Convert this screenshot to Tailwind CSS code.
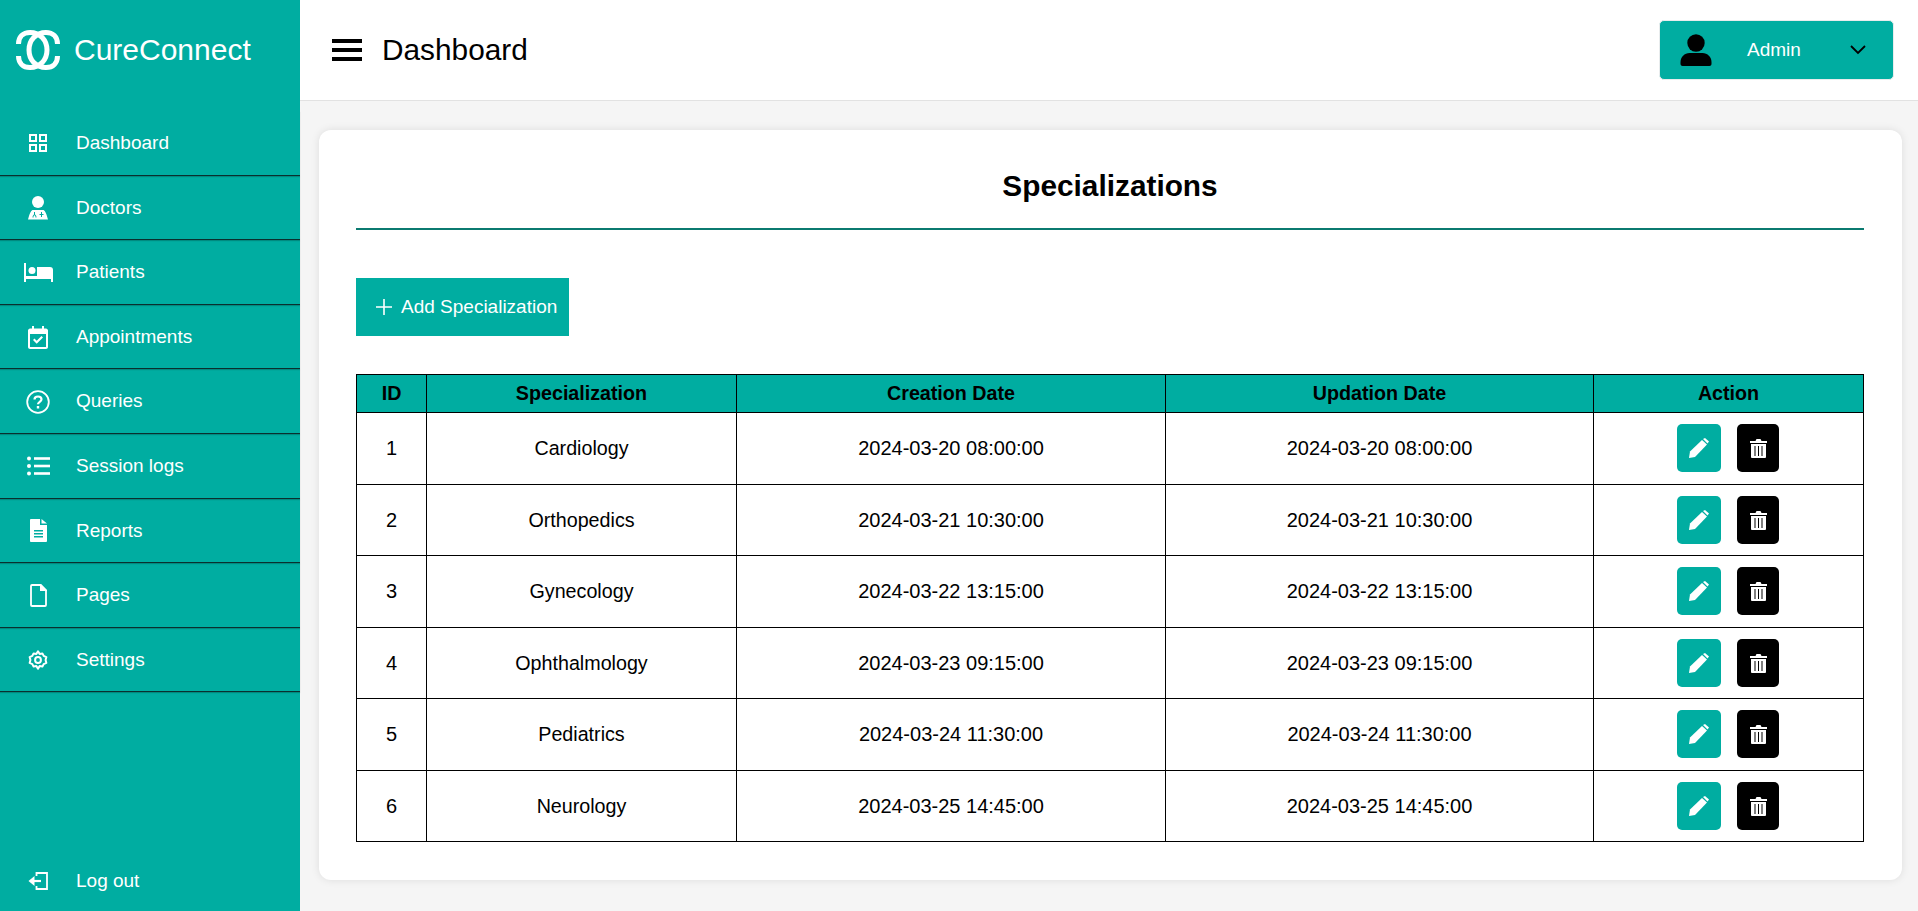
<!DOCTYPE html>
<html lang="en">
  <head>
    <meta charset="UTF-8" />
    <title>CureConnect - Specializations</title>
    <script src="https://cdn.jsdelivr.net/npm/@tailwindcss/browser@4"></script>
  </head>
  <body class="h-[911px] overflow-hidden bg-[#f5f5f5] font-['Liberation_Sans',Arial,sans-serif] text-black">
    <div class="flex h-full">
      <!-- Sidebar -->
      <aside class="flex h-full w-[300px] shrink-0 flex-col bg-[#00ada1] text-white">
        <div class="flex h-[100px] items-center pl-[16px]">
          <svg class="h-[40px] w-[44px]" viewBox="0 0 44 40" fill="none" stroke="#fff" stroke-width="5">
            <path d="M2.500 14C2.500 7 7 2.500 14 2.500 24 2.500 31 10 31 20 31 30 24 37.500 14 37.500 7 37.500 2.500 33 2.500 26" />
            <path d="M41.500 14C41.500 7 37 2.500 30 2.500 20 2.500 13 10 13 20 13 30 20 37.500 30 37.500 37 37.500 41.500 33 41.500 26" />
          </svg>
          <span class="ml-[14px] text-[30px] leading-none">CureConnect</span>
        </div>
        <nav class="mt-[11px] flex flex-col text-[19px]">
          <a class="flex h-[64.600px] items-center border-b border-[#0a2f2e] pt-[1px] shadow-[0_1px_1px_rgba(0,0,0,0.2)]">
            <span class="flex w-[76px] justify-center">
              <svg class="h-[18px] w-[18px]" viewBox="0 0 18 18" fill="none" stroke="#fff" stroke-width="2"><rect x="1" y="1" width="6" height="6" /><rect x="11" y="1" width="6" height="6" /><rect x="1" y="11" width="6" height="6" /><rect x="11" y="11" width="6" height="6" /></svg>
            </span>
            Dashboard
          </a>
          <a class="flex h-[64.600px] items-center border-b border-[#0a2f2e] pt-[1px] shadow-[0_1px_1px_rgba(0,0,0,0.2)]">
            <span class="flex w-[76px] justify-center">
              <svg class="h-[24px] w-[20px]" viewBox="0 0 20 24" fill="#fff"><circle cx="10" cy="6" r="6" /><path fill-rule="evenodd" d="M5 14h10c1.500 0 3 2 5 9.500H0C2 16 3.500 14 5 14zM6 16v2.500c-1 .5-1.500 1.500-1.500 3h1c0-1.500.5-2.200 1-2.200s1 .7 1 2.200h1c0-1.500-.5-2.500-1.500-3V16zM13 16v2h-1.500v1H13v2h1v-2h1.500v-1H14v-2z" /></svg>
            </span>
            Doctors
          </a>
          <a class="flex h-[64.600px] items-center border-b border-[#0a2f2e] pt-[1px] shadow-[0_1px_1px_rgba(0,0,0,0.2)]">
            <span class="flex w-[76px] justify-center">
              <svg class="h-[19px] w-[29px]" viewBox="0 0 29 19" fill="#fff"><rect width="2" height="19" /><rect y="13" width="29" height="3" /><rect x="27" y="13" width="2" height="6" /><path d="M13 4h13c2 0 3 1 3 3v7H13z" /><circle cx="8" cy="7.500" r="3.500" /></svg>
            </span>
            Patients
          </a>
          <a class="flex h-[64.600px] items-center border-b border-[#0a2f2e] pt-[1px] shadow-[0_1px_1px_rgba(0,0,0,0.2)]">
            <span class="flex w-[76px] justify-center">
              <svg class="h-[23px] w-[20px]" viewBox="0 0 20 23" fill="#fff"><path fill-rule="evenodd" d="M4 0h2v2.500h8V0h2v2.500h2c1 0 2 1 2 2V21c0 1-1 2-2 2H2c-1 0-2-1-2-2V4.500c0-1 1-2 2-2h2zM2 8v13h16V8z" /><path d="M5 14l1.500-1.500 2.200 2.200 4.800-4.700L15 11.500l-6.300 6.300z" /></svg>
            </span>
            Appointments
          </a>
          <a class="flex h-[64.600px] items-center border-b border-[#0a2f2e] pt-[1px] shadow-[0_1px_1px_rgba(0,0,0,0.2)]">
            <span class="flex w-[76px] justify-center">
              <svg class="h-[24px] w-[24px]" viewBox="0 0 24 24" fill="none" stroke="#fff" stroke-width="1.800"><circle cx="12" cy="12" r="10.800" /><path stroke-width="2.200" d="M8.500 9.500C8.500 7.500 10 6.500 12 6.500s3.500 1 3.500 2.800c0 2.500-3.500 2.500-3.500 5" /><path stroke-width="2.400" d="M12 16v2.500" /></svg>
            </span>
            Queries
          </a>
          <a class="flex h-[64.600px] items-center border-b border-[#0a2f2e] pt-[1px] shadow-[0_1px_1px_rgba(0,0,0,0.2)]">
            <span class="flex w-[76px] justify-center">
              <svg class="h-[20px] w-[23px]" viewBox="0 0 23 20" fill="#fff"><circle cx="2" cy="2.500" r="2" /><circle cx="2" cy="10" r="2" /><circle cx="2" cy="17.500" r="2" /><rect x="7" y="1.200" width="16" height="2.600" /><rect x="7" y="8.700" width="16" height="2.600" /><rect x="7" y="16.200" width="16" height="2.600" /></svg>
            </span>
            Session logs
          </a>
          <a class="flex h-[64.600px] items-center border-b border-[#0a2f2e] pt-[1px] shadow-[0_1px_1px_rgba(0,0,0,0.2)]">
            <span class="flex w-[76px] justify-center">
              <svg class="h-[23px] w-[17px]" viewBox="0 0 17 23" fill="#fff"><path fill-rule="evenodd" d="M1 0h9v6h7v16c0 .5-.5 1-1 1H1c-.5 0-1-.5-1-1V1c0-.5.5-1 1-1zM4 11v1.500h9V11zM4 14v1.500h9V14zM4 17v1.500h9V17z" /><path d="M11.500 0L17 4.500h-5.500z" /></svg>
            </span>
            Reports
          </a>
          <a class="flex h-[64.600px] items-center border-b border-[#0a2f2e] pt-[1px] shadow-[0_1px_1px_rgba(0,0,0,0.2)]">
            <span class="flex w-[76px] justify-center">
              <svg class="h-[23px] w-[17px]" viewBox="0 0 17 23" fill="none" stroke="#fff" stroke-width="1.800"><path d="M10.500 1H2c-.6 0-1 .4-1 1v19c0 .6.4 1 1 1h13c.6 0 1-.4 1-1V6.500z" /><path fill="#fff" stroke="none" d="M10 0h1l6 6v1h-7z" /></svg>
            </span>
            Pages
          </a>
          <a class="flex h-[64.600px] items-center border-b border-[#0a2f2e] pt-[1px] shadow-[0_1px_1px_rgba(0,0,0,0.2)]">
            <span class="flex w-[76px] justify-center">
              <svg class="h-[20px] w-[20px]" viewBox="0 0 24 24" fill="none" stroke="#fff" stroke-width="2.400" stroke-linejoin="round"><circle cx="12" cy="12" r="3.500" /><path d="M12 1.500l2 3.300 3.300-.7 1.500 3 3.200 1.400-.9 3.500.9 3.500-3.200 1.400-1.500 3-3.300-.7-2 3.300-2-3.300-3.300.7-1.500-3L2 15.500l.9-3.500L2 8.500l3.200-1.400 1.500-3 3.300.7z" /></svg>
            </span>
            Settings
          </a>
        </nav>
        <a class="mt-auto mb-[10px] flex h-[40px] items-center text-[19px]">
          <span class="flex w-[76px] justify-center">
            <svg class="h-[18px] w-[20px]" viewBox="0 0 20 18" fill="none" stroke="#fff" stroke-width="1.800"><path d="M8.500 4V1H19v16H8.500v-3" /><path d="M6 9h7" stroke-width="2.200" /><path fill="#fff" stroke="none" d="M0.500 9L6.500 4v10z" /></svg>
          </span>
          Log out
        </a>
      </aside>

      <div class="flex min-w-0 flex-1 flex-col">
        <!-- Top bar -->
        <header class="flex h-[101px] shrink-0 items-center justify-between border-b border-[#e2e2e2] bg-white pr-[24px] pl-[32px]">
          <div class="flex items-center">
            <svg class="h-[22px] w-[30px]" viewBox="0 0 30 22" fill="#000"><rect width="30" height="4" /><rect y="9" width="30" height="4" /><rect y="18" width="30" height="4" /></svg>
            <h1 class="ml-[20px] text-[29.800px] leading-none">Dashboard</h1>
          </div>
          <button class="flex h-[60px] w-[235px] items-center rounded-[5px] border border-[#e8eced] bg-[#00ada1] text-[19px] text-white">
            <svg class="ml-[20px] h-[32px] w-[32px]" viewBox="0 0 32 32" fill="#000"><circle cx="16" cy="9" r="8.700" /><path d="M0.500 28c0-5 4-9 9-9h13c5 0 9 4 9 9v2c0 1-1 2-2 2h-27c-1 0-2-1-2-2z" /></svg>
            <span class="ml-[35px]">Admin</span>
            <svg class="ml-[49px] h-[10px] w-[16px]" viewBox="0 0 16 10" fill="none" stroke="#000" stroke-width="1.800"><path d="M1 1l7 7 7-7" /></svg>
          </button>
        </header>

        <!-- Content -->
        <main class="flex-1 pt-[29px] pr-[16px] pb-[30px] pl-[19px]">
          <section class="h-[750px] rounded-[12px] bg-white pr-[38px] pl-[37px] shadow-[0_0_8px_rgba(0,0,0,0.1)]">
            <h2 class="h-[100px] border-b-[2px] border-[#0b7a70] pt-[38px] text-center text-[29.800px] leading-[36px] font-bold">Specializations</h2>
            <button class="mt-[48px] flex h-[58px] w-[213px] items-center bg-[#00ada1] pl-[20px] text-[19px] text-white">
              <svg class="mr-[9px] h-[16px] w-[16px]" viewBox="0 0 16 16" stroke="#fff" stroke-width="1.600"><path d="M8 0v16M0 8h16" /></svg>
              Add Specialization
            </button>
            <table class="mt-[38px] w-[1507px] table-fixed border-collapse border border-black text-center text-[20px]">
              <colgroup>
                <col class="w-[70px]" />
                <col class="w-[310px]" />
                <col class="w-[429px]" />
                <col class="w-[428px]" />
                <col class="w-[270px]" />
              </colgroup>
              <thead>
                <tr class="h-[38px] bg-[#00ada1]">
                  <th class="border border-black text-[19.700px] font-bold">ID</th>
                  <th class="border border-black text-[19.700px] font-bold">Specialization</th>
                  <th class="border border-black text-[19.700px] font-bold">Creation Date</th>
                  <th class="border border-black text-[19.700px] font-bold">Updation Date</th>
                  <th class="border border-black text-[19.700px] font-bold">Action</th>
                </tr>
              </thead>
              <tbody id="rows"></tbody>
            </table>
          </section>
        </main>
      </div>
    </div>

    <script>
      const specializations = [
        [1, "Cardiology", "2024-03-20 08:00:00"],
        [2, "Orthopedics", "2024-03-21 10:30:00"],
        [3, "Gynecology", "2024-03-22 13:15:00"],
        [4, "Ophthalmology", "2024-03-23 09:15:00"],
        [5, "Pediatrics", "2024-03-24 11:30:00"],
        [6, "Neurology", "2024-03-25 14:45:00"],
      ];

      document.getElementById("rows").innerHTML = specializations
        .map(
          ([id, name, date]) => `
          <tr class="h-[71.500px]">
            <td class="border border-black">${id}</td>
            <td class="border border-black pt-[2px] text-[19.700px]">${name}</td>
            <td class="border border-black">${date}</td>
            <td class="border border-black">${date}</td>
            <td class="border border-black">
              <div class="flex justify-center gap-[16px] pr-[1px]">
                <button class="flex h-[48px] w-[44px] items-center justify-center rounded-[5px] bg-[#00ada1]">
                  <svg class="h-[20px] w-[20px]" viewBox="0 0 20 20" fill="#fff"><path d="M14 1l2-1 4 3.500-1.500 2z" /><path d="M13 2l5 4.500L6 19l-6 1 1-6.500z" /></svg>
                </button>
                <button class="flex h-[48px] w-[42px] items-center justify-center rounded-[5px] bg-black">
                  <svg class="h-[20px] w-[17px]" viewBox="0 0 17 20" fill="#fff"><path fill-rule="evenodd" d="M0 3h5.500L6.500 1h4l1 2H17v2H0zM1 6h15v13c0 .5-.5 1-1 1H2c-.5 0-1-.5-1-1zM4.500 8v10h1V8zM8 8v10h1V8zM11.500 8v10h1V8z" /></svg>
                </button>
              </div>
            </td>
          </tr>`,
        )
        .join("");
    </script>
  </body>
</html>
